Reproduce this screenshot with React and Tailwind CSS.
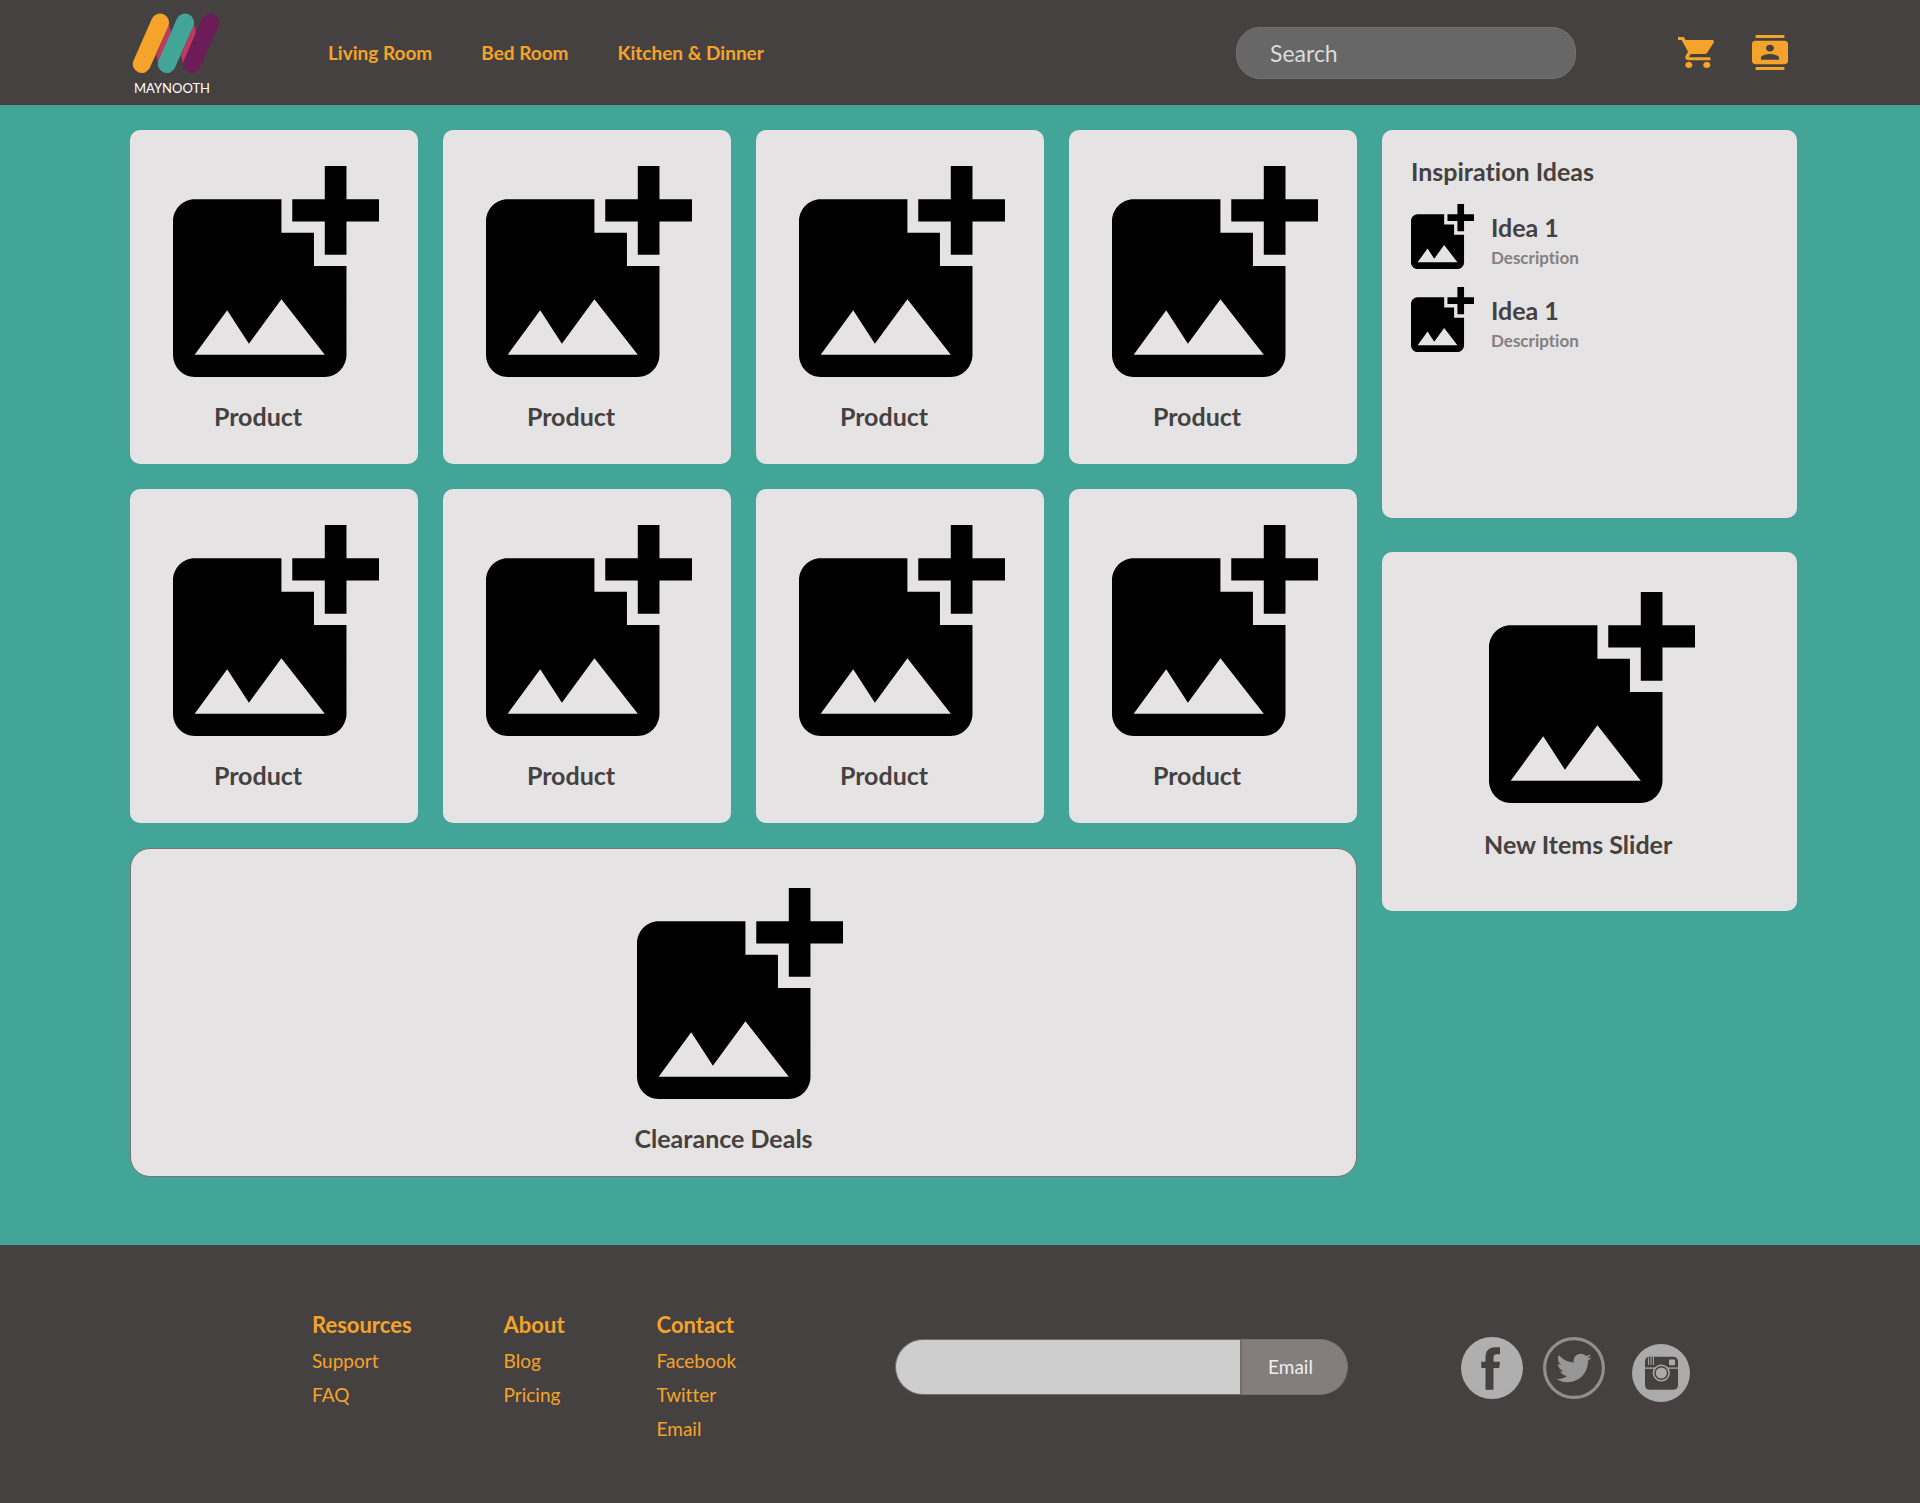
import React from 'react';
import { FaTwitter } from 'react-icons/fa';

const products = Array.from({ length: 8 }, (_, i) => ({ id: i, name: 'Product' }));
const ideas = [
  { id: 1, title: 'Idea 1', description: 'Description' },
  { id: 2, title: 'Idea 1', description: 'Description' },
];
const navLinks = ['Living Room', 'Bed Room', 'Kitchen & Dinner'];
const footerColumns = [
  { title: 'Resources', links: ['Support', 'FAQ'] },
  { title: 'About', links: ['Blog', 'Pricing'] },
  { title: 'Contact', links: ['Facebook', 'Twitter', 'Email'] },
];

function AddPhoto({ className }) {
  return (
    <svg viewBox="3 2 19 19" preserveAspectRatio="none" className={className} fill="#000" aria-hidden="true">
      <path d="M19 10h-2V7h-3V5h3V2h2v3h3v2h-3zM16 11V8h-3V5H5c-1.1 0-2 .9-2 2v12c0 1.1.9 2 2 2h12c1.1 0 2-.9 2-2v-8h-3zM5 19l3-4 2 3 3-4 4 5H5z" />
    </svg>
  );
}

function Logo() {
  return (
    <a href="#" className="flex w-22 flex-col gap-1.5 pt-1">
      <svg viewBox="132 13 88 61" className="h-[61px] w-22" aria-hidden="true">
        <path d="M168.8 24l2.8 10L158.6 64l-2.4-9z" fill="#BF3A5E" />
        <path d="M194 24l2.2 10L183 64l-2-9z" fill="#BF3A5E" />
        <g strokeWidth="18" strokeLinecap="round">
          <path d="M160 22.6L141.8 64" stroke="#F5A32A" />
          <path d="M185 22.6L166.8 64" stroke="#42A598" />
          <path d="M210.2 22.6L192 64" stroke="#6C1D57" />
        </g>
      </svg>
      <span className="pl-0.5 text-[13px] leading-4 text-white">MAYNOOTH</span>
    </a>
  );
}

function Header() {
  return (
    <header className="flex items-center bg-[#454140] py-[9px] pr-[132px] pl-[132px]">
      <Logo />
      <nav className="ml-[108px] flex gap-[49px]">
        {navLinks.map((label) => (
          <a key={label} href="#" className="text-[19px] leading-6 font-bold whitespace-nowrap text-[#F5A32A]">
            {label}
          </a>
        ))}
      </nav>
      <input
        type="search"
        aria-label="Search"
        placeholder="Search"
        className="ml-auto h-[52px] w-[340px] rounded-[24px] border border-[#737373] bg-[#676767] px-[33px] text-[23px] text-[#DCDCDC] placeholder:text-[#DCDCDC]"
      />
      <div className="ml-[102px] flex items-center gap-[38px]">
        <button type="button" aria-label="Cart">
          <svg viewBox="1 2 20 20" preserveAspectRatio="none" className="h-[31px] w-9" fill="#F5A32A">
            <path d="M7 18c-1.1 0-1.99.9-1.99 2S5.9 22 7 22s2-.9 2-2-.9-2-2-2zM1 2v2h2l3.6 7.59-1.35 2.45c-.16.28-.25.61-.25.96 0 1.1.9 2 2 2h12v-2H7.42c-.14 0-.25-.11-.25-.25l.03-.12.9-1.63h7.45c.75 0 1.41-.41 1.75-1.03l3.58-6.49c.08-.14.12-.31.12-.48 0-.55-.45-1-1-1H5.21l-.94-2H1zm16 16c-1.1 0-1.99.9-1.99 2s.89 2 1.99 2 2-.9 2-2-.9-2-2-2z" />
          </svg>
        </button>
        <button type="button" aria-label="Account">
          <svg viewBox="2 0 20 24" preserveAspectRatio="none" className="h-[35px] w-9" fill="#F5A32A">
            <path d="M20 0H4v2h16V0zM4 24h16v-2H4v2zM20 4H4c-1.1 0-2 .9-2 2v12c0 1.1.9 2 2 2h16c1.1 0 2-.9 2-2V6c0-1.1-.9-2-2-2zm-8 2.75c1.24 0 2.25 1.01 2.25 2.25s-1.01 2.25-2.25 2.25S9.75 10.24 9.75 9 10.76 6.75 12 6.75zM17 17H7v-1.5c0-1.67 3.33-2.5 5-2.5s5 .83 5 2.5V17z" />
          </svg>
        </button>
      </div>
    </header>
  );
}

function ProductCard({ name }) {
  return (
    <article className="rounded-[10px] bg-[#E5E3E4] pt-9 pb-[33px] pl-[43px]">
      <AddPhoto className="h-[211px] w-[206px]" />
      <h2 className="mt-6 w-[170px] text-center text-[25px] leading-[30px] font-bold">{name}</h2>
    </article>
  );
}

function Ideas() {
  return (
    <section className="min-h-[388px] rounded-[10px] bg-[#E5E3E4] px-[29px] pt-[26px] pb-6">
      <h2 className="text-[25px] leading-[30px] font-bold">Inspiration Ideas</h2>
      <ul className="mt-[18px] flex flex-col gap-[18px]">
        {ideas.map((idea) => (
          <li key={idea.id} className="flex items-end gap-[17px]">
            <AddPhoto className="h-[65px] w-[63px]" />
            <div className="flex flex-col gap-[5px]">
              <h3 className="text-[25px] leading-[30px] font-bold">{idea.title}</h3>
              <p className="text-[17px] leading-[22px] font-bold text-[#848080]">{idea.description}</p>
            </div>
          </li>
        ))}
      </ul>
    </section>
  );
}

function Socials() {
  return (
    <div className="mt-[27px] flex items-start">
      <a href="#" aria-label="Facebook">
        <svg viewBox="0 0 62 62" className="size-[62px]">
          <circle cx="31" cy="31" r="31" fill="#AFAFAF" />
          <path d="M24.5 52.7V31h-4.2v-6.3h4.2V20c0-6 3.5-9.5 9.5-9.7h5v7h-3c-2.4 0-3.5 1-3.5 3.2v4.2H39l-.8 6.3h-5.7v21.7z" fill="#454140" />
        </svg>
      </a>
      <a href="#" aria-label="Twitter" className="ml-5">
        <svg viewBox="0 0 62 62" className="size-[62px]">
          <circle cx="31" cy="31" r="29.4" fill="none" stroke="#8F8F8F" strokeWidth="3.2" />
          <FaTwitter x="13.5" y="13.5" size={35} color="#979797" />
        </svg>
      </a>
      <a href="#" aria-label="Instagram" className="mt-[7px] ml-[27px]">
        <svg viewBox="0 0 58 58" className="size-[58px]">
          <circle cx="29" cy="29" r="29" fill="#ABABAB" />
          <rect x="13" y="12.8" width="33" height="33" rx="4.5" fill="#454140" />
          <path d="M13 24.2h33" stroke="#ABABAB" strokeWidth="1.2" />
          <path d="M16.6 13.5V21M19 12.8V21M21.4 12.8V21" stroke="#ABABAB" strokeWidth="1" />
          <rect x="37" y="15.6" width="6" height="5.6" rx="1" fill="#ABABAB" />
          <circle cx="29.3" cy="29" r="8.6" fill="#ABABAB" />
          <circle cx="29.3" cy="29" r="6.3" fill="#ABABAB" stroke="#454140" strokeWidth="1.5" />
        </svg>
      </a>
    </div>
  );
}

function Footer() {
  return (
    <footer className="flex grow items-start bg-[#454140] pt-[65px] pr-[230px] pb-[57px] pl-[312px]">
      <div className="flex gap-[92px]">
        {footerColumns.map((column) => (
          <section key={column.title} className="text-[#F5A32A]">
            <h2 className="text-[22px] leading-[30px] font-bold">{column.title}</h2>
            <ul className="mt-1 text-[19px] leading-[34px]">
              {column.links.map((link) => (
                <li key={link}>
                  <a href="#">{link}</a>
                </li>
              ))}
            </ul>
          </section>
        ))}
      </div>
      <form className="mt-[29px] mr-[113px] ml-[159px] flex h-14 min-w-0 flex-1" onSubmit={(e) => e.preventDefault()}>
        <input
          type="email"
          aria-label="Email address"
          className="min-w-0 flex-1 rounded-l-full border border-r-2 border-[#6F6F6F] bg-[#CECECE] px-7 text-[19px] text-[#454140]"
        />
        <button
          type="submit"
          className="w-[106px] rounded-r-full border border-l-0 border-[#777474] bg-[#837E7D] pr-2 text-[19px] text-[#F0EEEE]"
        >
          Email
        </button>
      </form>
      <Socials />
    </footer>
  );
}

export default function App() {
  return (
    <div className="flex min-h-screen flex-col bg-[#42A598] font-['Lato',sans-serif] text-[#454140] [font-variant-ligatures:no-common-ligatures]">
      <Header />
      <main className="grid grid-cols-[1227fr_415fr] items-start gap-[25px] pt-[25px] pr-[123px] pb-[68px] pl-[130px]">
        <div className="flex flex-col gap-[25px]">
          <div className="grid grid-cols-4 gap-[25px]">
            {products.map((product) => (
              <ProductCard key={product.id} name={product.name} />
            ))}
          </div>
          <section className="flex justify-center rounded-[20px] border border-[#767474] bg-[#E5E3E4] pt-[39px] pr-2.5 pb-[23px]">
            <div className="flex w-52 flex-col">
              <AddPhoto className="h-[211px] w-[206px] self-end" />
              <h2 className="mt-6 text-[25px] leading-[30px] font-bold">Clearance Deals</h2>
            </div>
          </section>
        </div>
        <aside className="flex flex-col gap-[34px]">
          <Ideas />
          <section className="flex justify-center rounded-[10px] bg-[#E5E3E4] pt-10 pb-[52px]">
            <div className="flex w-[211px] flex-col">
              <AddPhoto className="h-[211px] w-[206px] self-end" />
              <h2 className="mt-[26px] text-[25px] leading-[30px] font-bold">New Items Slider</h2>
            </div>
          </section>
        </aside>
      </main>
      <Footer />
    </div>
  );
}
